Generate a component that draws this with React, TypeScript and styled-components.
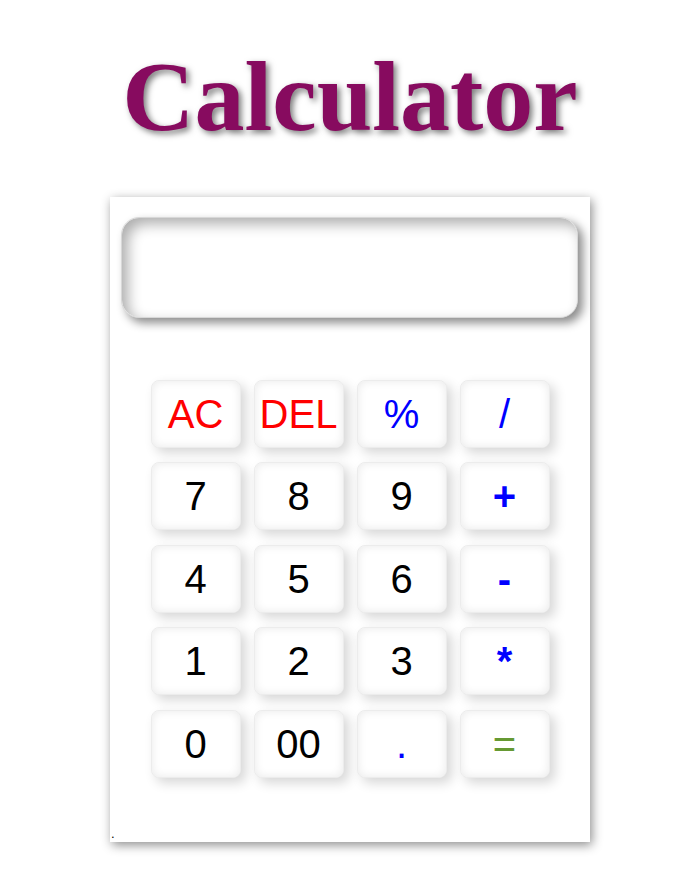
import React from "react";
import styled, { createGlobalStyle } from "styled-components";

const Global = createGlobalStyle`
  html, body { margin: 0; padding: 0; background: #ffffff; }
  body { font-family: "Liberation Sans", Arial, sans-serif; }
`;

const Page = styled.div`
  padding-left: 8px;
  padding-bottom: 20px;
  display: flex;
  flex-direction: column;
  align-items: center;
`;

const Title = styled.h1`
  margin: 0;
  padding-top: 42px;
  font-family: "Liberation Serif", "Times New Roman", serif;
  font-weight: 700;
  font-size: 100px;
  line-height: 1.107;
  color: #870b5f;
  text-shadow: 3px 3px 6px #7a7a7a;
`;

const Card = styled.div`
  box-sizing: border-box;
  margin-top: 44px;
  width: 480px;
  height: 645px;
  padding-top: 20px;
  background: #fff;
  box-shadow: 2px 3px 10px rgba(0, 0, 0, 0.45);
  display: flex;
  flex-direction: column;
`;

const Display = styled.input`
  box-sizing: border-box;
  margin-left: 11px;
  width: 457px;
  height: 101px;
  border: 1px solid #d8d8d8;
  border-radius: 18px;
  background: #fff;
  outline: none;
  box-shadow: inset 6px 6px 14px rgba(0, 0, 0, 0.32),
    5px 5px 10px rgba(0, 0, 0, 0.45);
  font-family: "Liberation Sans", Arial, sans-serif;
  font-size: 40px;
  text-align: right;
  padding: 0 20px;
`;

const Keys = styled.div`
  margin-top: 62px;
  align-self: center;
  display: grid;
  grid-template-columns: repeat(4, 90px);
  grid-auto-rows: 68px;
  column-gap: 13px;
  row-gap: 14.5px;
`;

type Tone = "red" | "blue" | "black" | "green";
const toneColor: Record<Tone, string> = {
  red: "#ff0000",
  blue: "#0000ff",
  black: "#000000",
  green: "#669933",
};

const Key = styled.button<{ $tone: Tone; $bold?: boolean }>`
  box-sizing: border-box;
  border: 1px solid #ececec;
  border-radius: 8px;
  background: #fff;
  box-shadow: inset 0 0 10px rgba(0, 0, 0, 0.09),
    5px 5px 12px rgba(0, 0, 0, 0.16);
  font-family: "Liberation Sans", Arial, sans-serif;
  font-size: 40px;
  font-weight: ${(p) => (p.$bold ? 700 : 400)};
  line-height: 1;
  color: ${(p) => toneColor[p.$tone]};
  padding: 0;
  cursor: pointer;
  display: flex;
  align-items: center;
  justify-content: center;
`;

const Dot = styled.div`
  margin-top: auto;
  margin-bottom: 2px;
  padding-left: 1px;
  font-family: "Liberation Sans", Arial, sans-serif;
  font-size: 13px;
  line-height: 12px;
  color: #000;
`;

const keys: [string, Tone, boolean?][] = [
  ["AC", "red"], ["DEL", "red"], ["%", "blue"], ["/", "blue"],
  ["7", "black"], ["8", "black"], ["9", "black"], ["+", "blue", true],
  ["4", "black"], ["5", "black"], ["6", "black"], ["-", "blue", true],
  ["1", "black"], ["2", "black"], ["3", "black"], ["*", "blue", true],
  ["0", "black"], ["00", "black"], [".", "blue"], ["=", "green"],
];

export default function App() {
  return (
    <>
      <Global />
      <Page>
        <Title>Calculator</Title>
        <Card>
          <Display type="text" readOnly value="" />
          <Keys>
            {keys.map(([label, tone, bold]) => (
              <Key key={label} $tone={tone} $bold={bold}>
                {label}
              </Key>
            ))}
          </Keys>
          <Dot>.</Dot>
        </Card>
      </Page>
    </>
  );
}
